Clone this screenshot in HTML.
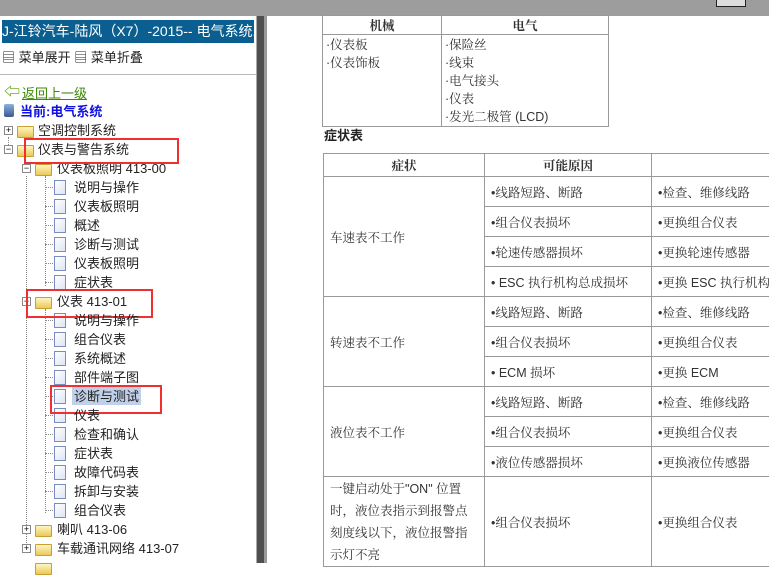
<!DOCTYPE html><html><head><meta charset="utf-8"><style>
body{margin:0;width:769px;height:563px;overflow:hidden;position:relative;background:#fff;font-family:"Liberation Sans","Noto Sans CJK SC",sans-serif;}
.a{position:absolute;white-space:nowrap}
.t{font-size:13px;color:#222;line-height:19px}
.box{position:absolute;width:7px;height:7px;border:1px solid #888;background:#fff;font-size:9px;line-height:7px;text-align:center;color:#000}
.fold{position:absolute;width:15px;height:10px;background:linear-gradient(#fff6c0,#e8c95a);border:1px solid #c8a030;border-radius:1px}
.doc{position:absolute;width:10px;height:13px;background:linear-gradient(135deg,#fff,#dde4f4);border:1px solid #7a8cc0}
.hd{position:absolute;border-top:1px dotted #888;width:8px}
.vd{position:absolute;border-left:1px dotted #888}
.red{position:absolute;border:2px solid #f03030}
table{border-collapse:collapse;font-family:"Liberation Sans","Noto Serif CJK SC",sans-serif;font-size:12.5px;color:#333}
td{border:1px solid #999;padding:0 6px;vertical-align:middle}
</style></head><body>
<div class="a" style="left:0;top:0;width:769px;height:16px;background:#9d9d9d"></div>
<div class="a" style="left:716px;top:0;width:28px;height:6px;border:1px solid #222;border-top:none;background:#ddd"></div>
<div class="a" style="left:256px;top:16px;width:1px;height:547px;background:#aaa"></div>
<div class="a" style="left:257px;top:16px;width:7px;height:547px;background:#4f4f4f"></div>
<div class="a" style="left:264px;top:16px;width:3px;height:547px;background:#9a9a9a"></div>
<div class="a" style="left:2px;top:20px;width:252px;height:23px;background:#0a5f90;color:#fff;font-size:14px;line-height:23px;overflow:hidden">J-江铃汽车-陆风（X7）-2015-- 电气系统.</div>
<div class="a t" style="left:2px;top:48px">▤ 菜单展开 ▤ 菜单折叠</div>
<div class="a" style="left:0;top:74px;width:256px;height:1px;background:#bbb"></div>
<div class="a" style="left:4px;top:85px;color:#5a9a00;font-size:16px;line-height:16px">⇦</div>
<div class="a t" style="left:22px;top:84px;color:#3a8a00;text-decoration:underline">返回上一级</div>
<div class="a" style="left:4px;top:104px;width:10px;height:13px;background:linear-gradient(#8ab0e0,#3c5a90);border-radius:2px"></div>
<div class="a t" style="left:20px;top:102px;color:#1010e0;font-weight:bold">当前:电气系统</div>
<div class="vd" style="left:8px;top:137px;height:12px"></div>
<div class="vd" style="left:26px;top:176px;height:125px"></div>
<div class="vd" style="left:45px;top:176px;height:110px"></div>
<div class="vd" style="left:45px;top:309px;height:204px"></div>
<div class="vd" style="left:26px;top:309px;height:240px"></div>
<div class="box" style="left:4px;top:126px">+</div><div class="fold" style="left:17px;top:126px"></div><div class="a t" style="left:38px;top:121px">空调控制系统</div>
<div class="box" style="left:4px;top:145px">−</div><div class="fold" style="left:17px;top:145px"></div><div class="a t" style="left:38px;top:140px">仪表与警告系统</div>
<div class="box" style="left:22px;top:164px">−</div><div class="fold" style="left:35px;top:164px"></div><div class="a t" style="left:57px;top:159px">仪表板照明 413-00</div>
<div class="box" style="left:22px;top:297px">−</div><div class="fold" style="left:35px;top:297px"></div><div class="a t" style="left:57px;top:292px">仪表 413-01</div>
<div class="box" style="left:22px;top:525px">+</div><div class="fold" style="left:35px;top:525px"></div><div class="a t" style="left:57px;top:520px">喇叭 413-06</div>
<div class="box" style="left:22px;top:544px">+</div><div class="fold" style="left:35px;top:544px"></div><div class="a t" style="left:57px;top:539px">车载通讯网络 413-07</div>
<div class="fold" style="left:35px;top:563px"></div>
<div id="docs"></div>
<div class="red" style="left:24px;top:138px;width:151px;height:22px"></div>
<div class="red" style="left:26px;top:289px;width:123px;height:25px"></div>
<div class="red" style="left:50px;top:385px;width:108px;height:25px"></div>
<div class="a" style="left:72px;top:387px;width:69px;height:18px;background:#c0d0e8"></div>
<script>
var L=[[178,"说明与操作"],[197,"仪表板照明"],[216,"概述"],[235,"诊断与测试"],[254,"仪表板照明"],[273,"症状表"],[311,"说明与操作"],[330,"组合仪表"],[349,"系统概述"],[368,"部件端子图"],[387,"诊断与测试"],[406,"仪表"],[425,"检查和确认"],[444,"症状表"],[463,"故障代码表"],[482,"拆卸与安装"],[501,"组合仪表"]];
var h="";L.forEach(function(r){var y=r[0];h+='<div class="hd" style="left:45px;top:'+(y+9)+'px"></div><div class="doc" style="left:54px;top:'+(y+2)+'px"></div><div class="a t" style="left:74px;top:'+y+'px;z-index:2">'+r[1]+'</div>';});
document.getElementById("docs").innerHTML=h;
</script>
<table class="a" style="left:322px;top:15px;width:287px">
<tr style="height:17px"><td style="width:112px;text-align:center;font-weight:bold;padding:0 3px">机械</td><td style="text-align:center;font-weight:bold;padding:0 3px">电气</td></tr>
<tr><td style="vertical-align:top;line-height:18px;padding:1px 3px">·仪表板<br>·仪表饰板</td><td style="line-height:18px;padding:1px 3px 0">·保险丝<br>·线束<br>·电气接头<br>·仪表<br>·发光二极管 (LCD)</td></tr>
</table>
<div class="a" style="left:324px;top:125px;font-size:13px;font-weight:bold;color:#222">症状表</div>
<table class="a" style="left:323px;top:153px;width:470px">
<tr style="height:23px;font-weight:bold"><td style="width:148px;text-align:center">症状</td><td style="width:154px;text-align:center">可能原因</td><td></td></tr>
<tr style="height:30px"><td rowspan="4">车速表不工作</td><td>•线路短路、断路</td><td>•检查、维修线路</td></tr>
<tr style="height:30px"><td>•组合仪表损坏</td><td>•更换组合仪表</td></tr>
<tr style="height:30px"><td>•轮速传感器损坏</td><td>•更换轮速传感器</td></tr>
<tr style="height:30px"><td>• ESC 执行机构总成损坏</td><td>•更换 ESC 执行机构</td></tr>
<tr style="height:30px"><td rowspan="3">转速表不工作</td><td>•线路短路、断路</td><td>•检查、维修线路</td></tr>
<tr style="height:30px"><td>•组合仪表损坏</td><td>•更换组合仪表</td></tr>
<tr style="height:30px"><td>• ECM 损坏</td><td>•更换 ECM</td></tr>
<tr style="height:30px"><td rowspan="3">液位表不工作</td><td>•线路短路、断路</td><td>•检查、维修线路</td></tr>
<tr style="height:30px"><td>•组合仪表损坏</td><td>•更换组合仪表</td></tr>
<tr style="height:30px"><td>•液位传感器损坏</td><td>•更换液位传感器</td></tr>
<tr style="height:90px"><td style="line-height:22px;white-space:normal">一键启动处于"ON" 位置时，液位表指示到报警点刻度线以下，液位报警指示灯不亮</td><td>•组合仪表损坏</td><td>•更换组合仪表</td></tr>
</table>
</body></html>
